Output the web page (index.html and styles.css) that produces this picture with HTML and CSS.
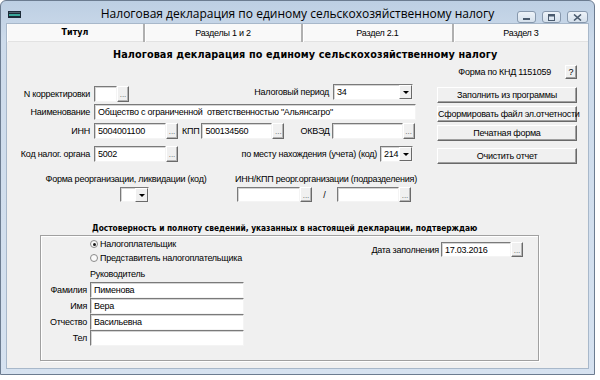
FILE: index.html
```html
<!DOCTYPE html>
<html lang="ru">
<head>
<meta charset="utf-8">
<title>Налоговая декларация по ЕСХН</title>
<link rel="stylesheet" href="styles.css">
</head>
<body>
<div class="window">
  <div class="titlebar">
    <svg class="app-icon" width="13" height="7" viewBox="0 0 13 7">
      <rect x="0" y="0" width="13" height="7" fill="#1d2b38"/>
      <rect x="1" y="3" width="11" height="2" fill="#3aa79a"/>
      <rect x="1" y="1" width="11" height="1" fill="#50606e"/>
    </svg>
    <div class="title">Налоговая декларация по единому сельскохозяйственному налогу</div>
    <div class="winbtns">
      <span class="wb"><svg width="9" height="7" viewBox="0 0 9 7"><rect x="1" y="4" width="7" height="2" fill="#4b5b6e"/></svg></span>
      <span class="wb"><svg width="9" height="7" viewBox="0 0 9 7"><rect x="1.5" y="0.5" width="6" height="6" fill="none" stroke="#4b5b6e"/><rect x="1.5" y="0.5" width="6" height="2" fill="#4b5b6e"/></svg></span>
      <span class="wb close"><svg width="9" height="7" viewBox="0 0 9 7"><path d="M1 0.5 L8 6.5 M8 0.5 L1 6.5" stroke="#4b5b6e" stroke-width="1.6"/></svg></span>
    </div>
  </div>
  <div class="client">
    <div class="tabs">
      <div class="tab active">Титул</div>
      <div class="tab t2">Разделы 1 и 2</div>
      <div class="tab t3">Раздел 2.1</div>
      <div class="tab t4">Раздел 3</div>
    </div>
    <div class="page">
      <div class="heading">Налоговая декларация по единому сельскохозяйственному налогу</div>
      <div class="main">
        <div class="form">
          <div class="row r1">
            <div class="grp g-n">
              <span class="lbl lcol">N корректировки</span>
              <span class="inp w23"></span><span class="dots">...</span>
            </div>
            <div class="grp g-period">
              <span class="lbl">Налоговый период</span>
              <span class="sel w80"><span class="val">34</span><span class="arrow"></span></span>
            </div>
          </div>
          <div class="row r2">
            <span class="lbl lcol">Наименование</span>
            <span class="inp w322">Общество с ограниченной&nbsp; ответственностью "Альянсагро"</span>
          </div>
          <div class="row r3">
            <span class="lbl lcol">ИНН</span>
            <span class="inp w72">5004001100</span><span class="dots">...</span>
            <span class="lbl kpp">КПП</span>
            <span class="inp w71">500134560</span><span class="dots">...</span>
            <span class="lbl okved">ОКВЭД</span>
            <span class="inp w71"></span><span class="dots">...</span>
          </div>
          <div class="row r4">
            <span class="lbl lcol">Код налог. органа</span>
            <span class="inp w72">5002</span><span class="dots">...</span>
            <div class="grp g-place">
              <span class="lbl">по месту нахождения (учета) (код)</span>
              <span class="sel w33"><span class="val">214</span><span class="arrow"></span></span>
            </div>
          </div>
          <div class="row r5">
            <div class="block b1">
              <span class="lbl">Форма реорганизации, ликвидации (код)</span>
              <span class="sel w29 reorg"><span class="val"></span><span class="arrow"></span></span>
            </div>
            <div class="block b2">
              <span class="lbl">ИНН/КПП реорг.организации (подразделения)</span>
              <div class="ctrls">
                <span class="inp w63"></span><span class="dots">...</span>
                <span class="slash">/</span>
                <span class="inp w62"></span><span class="dots">...</span>
              </div>
            </div>
          </div>
        </div>
        <div class="side">
          <div class="knd"><span class="lbl">Форма по КНД 1151059</span><span class="btn q">?</span></div>
          <span class="btn wide b-fill">Заполнить из программы</span>
          <span class="btn wide b-file">Сформировать файл эл.отчетности</span>
          <span class="btn wide b-print">Печатная форма</span>
          <span class="btn wide b-clear">Очистить отчет</span>
        </div>
      </div>
      <div class="confirm">Достоверность и полноту сведений, указанных в настоящей декларации, подтверждаю</div>
      <div class="group">
        <div class="top">
          <div class="radios">
            <div class="radio"><span class="rb on"></span>Налогоплательщик</div>
            <div class="radio"><span class="rb"></span>Представитель налогоплательщика</div>
            <div class="lbl head">Руководитель</div>
          </div>
          <div class="date">
            <span class="lbl">Дата заполнения</span>
            <span class="inp w70">17.03.2016</span><span class="dots">...</span>
          </div>
        </div>
        <div class="person">
          <span class="lbl">Фамилия</span><span class="inp">Пименова</span>
          <span class="lbl">Имя</span><span class="inp">Вера</span>
          <span class="lbl">Отчество</span><span class="inp">Васильевна</span>
          <span class="lbl">Тел</span><span class="inp"></span>
        </div>
      </div>
    </div>
  </div>
</div>
</body>
</html>
```
FILE: styles.css
```css
* { box-sizing: border-box; }
body {
  margin: 0;
  background: #ffffff;
  font-family: "Liberation Sans", Arial, sans-serif;
  font-size: 9px;
  letter-spacing: -0.25px;
  color: #000;
}
.window {
  width: 595px;
  height: 375px;
  border: 1px solid #6c7c90;
  border-radius: 6px 6px 0 0;
  background: linear-gradient(#bdcfe3, #cddbeb 40px, #d6e2f0);
  padding: 0 6px 6px;
  display: flex;
  flex-direction: column;
}
.titlebar {
  height: 23px;
  display: grid;
  grid-template-columns: 1fr auto 1fr;
  align-items: center;
}
.app-icon { margin: 3px 0 0 1px; }
.title {
  font-family: "Open Sans", "Noto Sans", sans-serif;
  font-size: 12px;
  letter-spacing: 0;
  color: #000;
  margin-top: 2px;
}
.winbtns {
  justify-self: end;
  display: flex;
  gap: 6px;
  align-self: start;
  margin-top: 10px;
}
.wb {
  width: 19px;
  height: 12px;
  border: 1px solid #8798ad;
  border-radius: 3px;
  background: linear-gradient(#eef3f9, #d5e0ec);
  display: flex;
  align-items: center;
  justify-content: center;
}
.wb.close { width: 21px; }
.client {
  flex: 1;
  background: #f0f0f0;
  display: flex;
  flex-direction: column;
  box-shadow: 0 0 0 1px #a8b8ca;
}
.tabs {
  height: 18px;
  display: grid;
  grid-template-columns: 136px 158px 151px 1fr;
  background: #f9f9f9;
  border-bottom: 1px solid #e2e2e2;
}
.tab {
  text-align: center;
  line-height: 18px;
  font-size: 9px;
  border-left: 2px solid #b0b0b0;
  box-shadow: inset 1px 0 0 #fff;
}
.tab.active { border-left: none; font-weight: bold; font-family: "DejaVu Sans", sans-serif; font-size: 8px; letter-spacing: 0; }
.page {
  flex: 1;
  display: flex;
  flex-direction: column;
}
.heading {
  margin: 6px 0 0 106px;
  font-family: "DejaVu Sans Condensed", "DejaVu Sans", sans-serif;
  font-weight: bold;
  font-size: 10.75px;
  line-height: 13px;
  letter-spacing: 0.1px;
}
.main {
  display: grid;
  grid-template-columns: 430px 140px;
}
.lbl { white-space: nowrap; }
.inp {
  height: 16px;
  background: #fff;
  border: 1px solid;
  border-color: #7a7a7a #f4f4f4 #f4f4f4 #7a7a7a;
  box-shadow: inset 1px 1px 0 #d4d4d4;
  padding: 0 3px;
  line-height: 14px;
  white-space: nowrap;
  overflow: hidden;
  display: inline-block;
}
.dots {
  width: 12px;
  height: 16px;
  background: #f0f0f0;
  border: 1px solid;
  border-color: #fff #6a6a6a #6a6a6a #fff;
  box-shadow: inset -1px -1px 0 #b4b4b4;
  font-size: 8px;
  line-height: 16px;
  letter-spacing: 0;
  color: #5a5a5a;
  text-align: center;
  display: inline-block;
}
.sel {
  height: 16px;
  background: #fff;
  border: 1px solid;
  border-color: #7a7a7a #f4f4f4 #f4f4f4 #7a7a7a;
  box-shadow: inset 1px 1px 0 #d4d4d4;
  display: flex;
  align-items: center;
  padding-left: 3px;
}
.sel .val { flex: 1; }
.sel .arrow {
  width: 13px;
  height: 14px;
  background: #f0f0f0;
  border: 1px solid;
  border-color: #fff #6a6a6a #6a6a6a #fff;
  position: relative;
}
.sel .arrow::after {
  content: "";
  position: absolute;
  left: 3px;
  top: 5px;
  border-left: 3px solid transparent;
  border-right: 3px solid transparent;
  border-top: 3px solid #000;
}
.w23 { width: 23px; }
.w29 { width: 29px; }
.w33 { width: 33px; }
.w62 { width: 62px; }
.w63 { width: 63px; }
.w70 { width: 70px; }
.w71 { width: 71px; }
.w72 { width: 72px; }
.w80 { width: 80px; }
.w322 { width: 322px; }
.row { display: flex; align-items: center; }
.grp { display: flex; align-items: center; }
.lcol { width: 83px; text-align: right; margin-right: 4px; display: inline-block; }
.r1 { align-items: flex-start; margin-top: 23px; }
.g-n { margin-top: 2px; }
.g-period { margin-left: auto; margin-right: 24px; }
.g-period .lbl { margin-right: 4px; }
.r2 { margin-top: 2px; }
.r3 { margin-top: 3px; }
.kpp { margin: 0 2px 0 4px; }
.okved { margin: 0 2px 0 16px; }
.r4 { margin-top: 7px; }
.g-place { margin-left: auto; margin-right: 24px; }
.g-place .lbl { margin-right: 3px; }
.r5 { margin-top: 11px; align-items: flex-start; }
.block { display: flex; flex-direction: column; align-items: center; }
.block .lbl { line-height: 12px; }
.b1 { width: 156px; margin-left: 41px; }
.reorg { margin: 2px 0 0 16px; height: 15px; }
.b2 { width: 180px; margin-left: 33px; align-items: flex-start; }
.b2 .lbl { margin-left: -2px; }
.ctrls { display: flex; align-items: center; margin-top: 2px; }
.ctrls .inp, .ctrls .dots { height: 15px; }
.slash { width: 25px; text-align: center; }
.side { display: flex; flex-direction: column; align-items: stretch; width: 140px; }
.knd { display: flex; align-items: center; justify-content: flex-end; margin-top: 4px; }
.btn {
  background: #f0f0f0;
  border: 1px solid;
  border-color: #fff #696969 #696969 #fff;
  box-shadow: inset -1px -1px 0 #a0a0a0;
  text-align: center;
  display: block;
}
.q { width: 12px; height: 14px; line-height: 12px; margin-left: 14px; }
.wide { height: 16px; line-height: 14px; margin-top: 3px; white-space: nowrap; }
.b-fill { margin-top: 8px; }
.b-clear { margin-top: 7px; }
.confirm {
  margin: 20px 0 0 85px;
  font-family: "DejaVu Sans Condensed", "DejaVu Sans", sans-serif;
  font-weight: bold;
  font-size: 8.3px;
  letter-spacing: 0;
  line-height: 12px;
}
.group {
  margin: 1px 0 0 33px;
  width: 499px;
  height: 126px;
  border: 1px solid #a0a0a0;
  box-shadow: inset 1px 1px 0 #fff, 1px 1px 0 #fff;
  padding-top: 1px;
}
.top { display: flex; }
.radios { margin-left: 49px; }
.radio { display: flex; align-items: center; height: 14px; }
.rb {
  width: 8px; height: 8px;
  border: 1px solid #8a8a8a;
  border-radius: 50%;
  background: #fafafa;
  margin-right: 2px;
  position: relative;
}
.rb.on::after {
  content: "";
  position: absolute;
  left: 1.5px; top: 1.5px;
  width: 3px; height: 3px;
  border-radius: 50%;
  background: #1a1a1a;
}
.head { margin-top: 2px; line-height: 14px; }
.date { margin-left: auto; margin-right: 15px; display: flex; align-items: center; margin-top: 5px; align-self: flex-start; }
.date .lbl { margin-right: 2px; }
.date .inp, .date .dots { height: 15px; }
.person {
  display: grid;
  grid-template-columns: 46px 154px;
  column-gap: 3px;
  margin-top: 1px;
}
.person .lbl { text-align: right; line-height: 16px; }
.person .inp { width: 154px; height: 16px; }
```
